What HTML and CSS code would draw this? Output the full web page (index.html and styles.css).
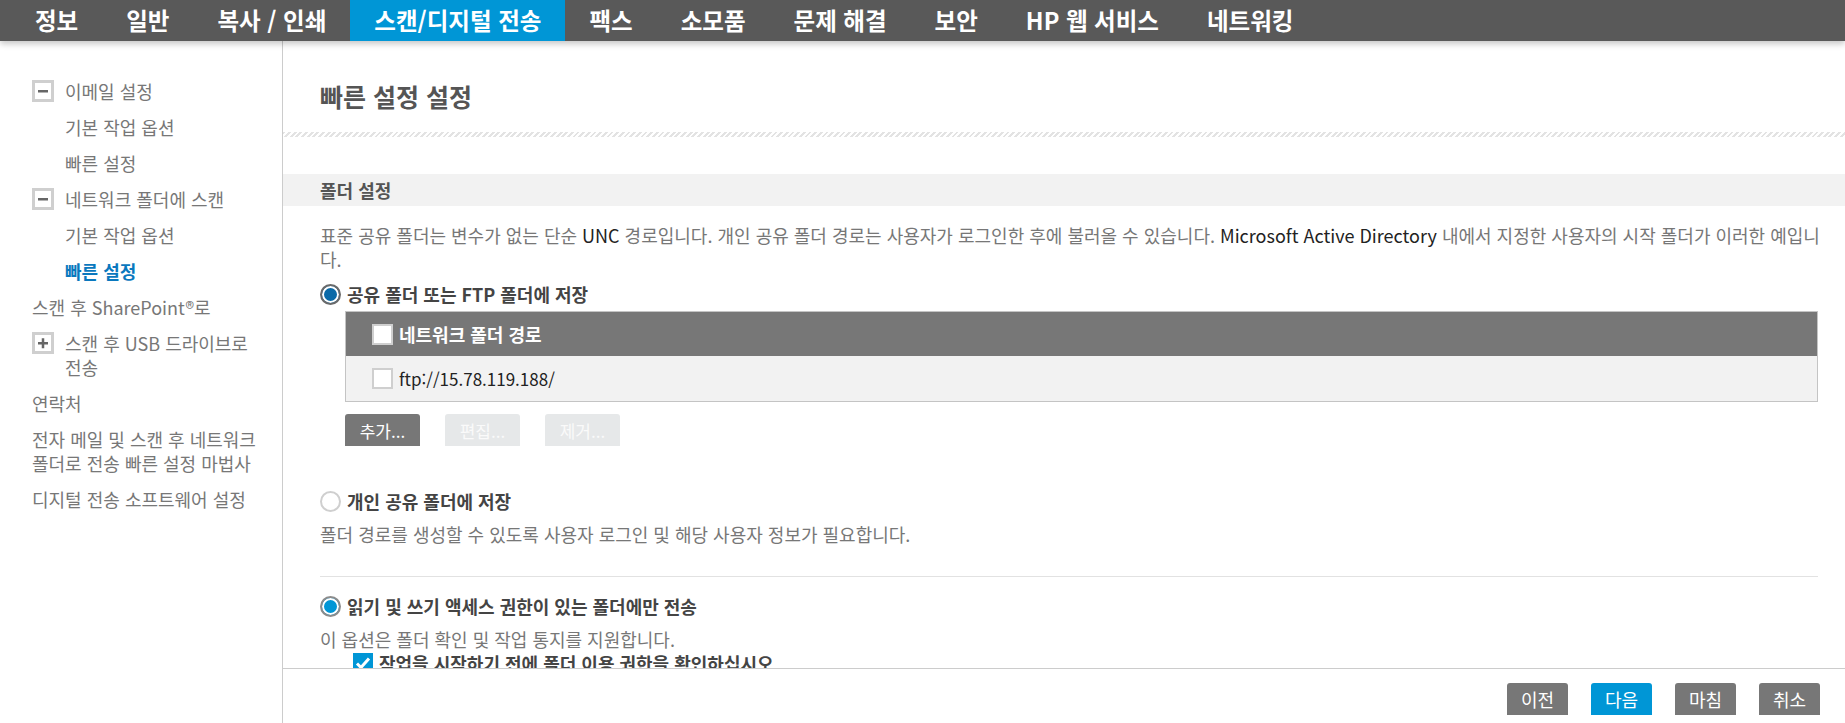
FILE: index.html
```html
<!DOCTYPE html>
<html lang="ko">
<head>
    <meta charset="UTF-8">
    <meta name="viewport" content="width=device-width, initial-scale=1.0">
    <title>스캔/디지털 전송 - 빠른 설정 설정</title>
    <link rel="stylesheet" href="styles.css">
</head>
<body>
    <nav class="topnav">
        <a class="tab">정보</a>
        <a class="tab">일반</a>
        <a class="tab">복사 / 인쇄</a>
        <a class="tab active">스캔/디지털 전송</a>
        <a class="tab">팩스</a>
        <a class="tab">소모품</a>
        <a class="tab">문제 해결</a>
        <a class="tab">보안</a>
        <a class="tab">HP 웹 서비스</a>
        <a class="tab">네트워킹</a>
    </nav>

    <div class="layout">
        <aside class="sidebar">
            <ul class="tree">
                <li class="node">
                    <svg class="toggle" viewBox="0 0 22 22"><rect x="1.5" y="1.5" width="19" height="19" fill="#fff" stroke="#cfcfcf" stroke-width="3"/><rect x="6" y="10" width="10" height="2.5" fill="#666"/></svg>
                    <span>이메일 설정</span>
                </li>
                <li class="leaf">기본 작업 옵션</li>
                <li class="leaf">빠른 설정</li>
                <li class="node">
                    <svg class="toggle" viewBox="0 0 22 22"><rect x="1.5" y="1.5" width="19" height="19" fill="#fff" stroke="#cfcfcf" stroke-width="3"/><rect x="6" y="10" width="10" height="2.5" fill="#666"/></svg>
                    <span>네트워크 폴더에 스캔</span>
                </li>
                <li class="leaf">기본 작업 옵션</li>
                <li class="leaf current">빠른 설정</li>
                <li class="top">스캔 후 SharePoint®로</li>
                <li class="node">
                    <svg class="toggle" viewBox="0 0 22 22"><rect x="1.5" y="1.5" width="19" height="19" fill="#fff" stroke="#cfcfcf" stroke-width="3"/><rect x="6" y="10" width="10" height="2.5" fill="#666"/><rect x="9.75" y="6.25" width="2.5" height="10" fill="#666"/></svg>
                    <span>스캔 후 USB 드라이브로 전송</span>
                </li>
                <li class="top">연락처</li>
                <li class="top">전자 메일 및 스캔 후 네트워크 폴더로 전송 빠른 설정 마법사</li>
                <li class="top">디지털 전송 소프트웨어 설정</li>
            </ul>
        </aside>

        <main class="main">
            <div class="page-head">
                <h1>빠른 설정 설정</h1>
            </div>
            <div class="hatch"></div>

            <div class="content">
                <h2 class="band">폴더 설정</h2>
                <div class="inner">
                    <p class="desc">표준 공유 폴더는 변수가 없는 단순 <span class="latin">UNC</span> 경로입니다. 개인 공유 폴더 경로는 사용자가 로그인한 후에 불러올 수 있습니다. <span class="latin">Microsoft Active Directory</span> 내에서 지정한 사용자의 시작 폴더가 이러한 예입니다.</p>

                    <label class="option first">
                        <span class="radio on dark"></span>공유 폴더 또는 FTP 폴더에 저장
                    </label>

                    <div class="table">
                        <div class="row head">
                            <span class="check"></span>네트워크 폴더 경로
                        </div>
                        <div class="row">
                            <span class="check"></span>ftp://15.78.119.188/
                        </div>
                    </div>

                    <div class="tools">
                        <button class="btn gray">추가...</button>
                        <button class="btn off">편집...</button>
                        <button class="btn off">제거...</button>
                    </div>

                    <label class="option second">
                        <span class="radio"></span>개인 공유 폴더에 저장
                    </label>
                    <p class="note">폴더 경로를 생성할 수 있도록 사용자 로그인 및 해당 사용자 정보가 필요합니다.</p>

                    <hr class="sep">

                    <label class="option third">
                        <span class="radio on"></span>읽기 및 쓰기 액세스 권한이 있는 폴더에만 전송
                    </label>
                    <p class="note">이 옵션은 폴더 확인 및 작업 통지를 지원합니다.</p>
                    <label class="sub-check">
                        <span class="check on">
                            <svg viewBox="0 0 20 20"><path d="M4 10.5l4 4 8-9" fill="none" stroke="#fff" stroke-width="3"/></svg>
                        </span>작업을 시작하기 전에 폴더 이용 권한을 확인하십시오
                    </label>
                </div>
            </div>

            <div class="footer">
                <button class="btn gray">이전</button>
                <button class="btn blue">다음</button>
                <button class="btn gray">마침</button>
                <button class="btn gray">취소</button>
            </div>
        </main>
    </div>
</body>
</html>
```

FILE: styles.css
```css
* {
    box-sizing: border-box;
}
body {
    margin: 0;
    height: 723px;
    overflow: hidden;
    font-family: "Noto Sans CJK KR", "Noto Sans", sans-serif;
    color: #777;
    background-color: #fff;
}

/* top tabs */
.topnav {
    display: flex;
    height: 41px;
    padding-left: 11px;
    background-color: #595959;
    box-shadow: 0 3px 6px rgba(0,0,0,0.22);
    position: relative;
    z-index: 2;
}
.tab {
    padding: 0 24px;
    font-size: 23.5px;
    font-weight: bold;
    line-height: 41px;
    color: #fff;
}
.tab.active {
    background-color: #0096d6;
}

.layout {
    display: flex;
    height: 682px;
}

/* left tree */
.sidebar {
    width: 283px;
    flex-shrink: 0;
    border-right: 1px solid #cccccc;
    padding: 32px 12px 0 32px;
}
.tree {
    list-style: none;
    margin: 0;
    padding: 0;
    font-size: 18px;
    line-height: 24px;
    word-break: keep-all;
}
.tree li {
    padding: 6px 0;
}
.tree .node {
    display: flex;
    align-items: flex-start;
    gap: 11px;
}
.toggle {
    width: 22px;
    height: 22px;
    flex-shrink: 0;
    margin-top: 1px;
}
.tree .leaf {
    padding-left: 33px;
}
.tree .current {
    color: #0a78be;
    font-weight: bold;
}

/* main */
.main {
    flex: 1;
    display: flex;
    flex-direction: column;
    min-width: 0;
}
.page-head {
    padding: 40px 0 0 37px;
    height: 91px;
}
.page-head h1 {
    margin: 0;
    font-size: 25px;
    line-height: 30px;
    color: #555;
}
.hatch {
    height: 5px;
    flex-shrink: 0;
    background: repeating-linear-gradient(135deg, #e3e3e3 0 2px, #fff 2px 4px);
}
.content {
    flex: 1;
    min-height: 0;
    overflow: hidden;
}
.band {
    margin: 37px 0 0;
    height: 32px;
    padding-left: 37px;
    background-color: #f2f2f2;
    font-size: 18px;
    line-height: 32px;
    color: #555;
}
.inner {
    padding: 0 27px 0 37px;
}
.desc {
    margin: 17px -8px 0 0;
    font-size: 18px;
    line-height: 24px;
}
.latin {
    color: #222;
}

.option {
    display: flex;
    align-items: center;
    gap: 6px;
    height: 24px;
    font-size: 18px;
    font-weight: bold;
    color: #444;
}
.option.first {
    margin-top: 11px;
}
.option.second {
    margin-top: 43px;
}
.option.third {
    margin-top: 17px;
}
.radio {
    width: 21px;
    height: 21px;
    border-radius: 50%;
    border: 2px solid #cfcfcf;
    background-color: #fff;
    flex-shrink: 0;
}
.radio.on {
    border-color: #8c8c8c;
    background-color: #0096d6;
    box-shadow: inset 0 0 0 2px #fff;
}
.radio.on.dark {
    border-color: #6a6a6a;
    background-color: #0a6aa8;
}

.table {
    margin: 5px 0 0 25px;
    border: 1px solid #c4c4c4;
}
.row {
    display: flex;
    align-items: center;
    gap: 6px;
    height: 45px;
    padding-left: 26px;
    background-color: #f2f2f2;
    font-size: 17px;
    color: #222;
}
.row.head {
    height: 44px;
    background-color: #777;
    color: #fff;
    font-size: 18px;
    font-weight: bold;
}
.check {
    width: 21px;
    height: 21px;
    border: 2px solid #cfcfcf;
    background-color: #fff;
    flex-shrink: 0;
}
.check.on {
    width: 20px;
    height: 20px;
    border: none;
    background-color: #0096d6;
}
.check.on svg {
    display: block;
    width: 20px;
    height: 20px;
}

.tools {
    display: flex;
    gap: 25px;
    margin: 12px 0 0 25px;
}
.btn {
    height: 32px;
    min-width: 61px;
    padding: 0 12px;
    border: none;
    border-radius: 3px 3px 0 0;
    font-family: inherit;
    font-size: 18px;
    color: #fff;
}
.btn.gray {
    background-color: #777;
}
.btn.blue {
    background-color: #0096d6;
}
.btn.off {
    background-color: #e6e8e9;
    color: #fafafa;
}
.tools .btn {
    width: 75px;
    font-size: 17px;
}

.note {
    margin: 9px 0 0;
    font-size: 18px;
    line-height: 24px;
}
.sep {
    margin: 30px 0 0;
    border: none;
    border-top: 1px solid #e2e2e2;
}
.sub-check {
    display: flex;
    align-items: center;
    gap: 6px;
    margin-left: 33px;
    height: 24px;
    font-size: 18px;
    font-weight: bold;
    color: #444;
}

.footer {
    height: 55px;
    flex-shrink: 0;
    border-top: 1px solid #cccccc;
    display: flex;
    justify-content: flex-end;
    align-items: flex-start;
    gap: 23px;
    padding: 14px 25px 0 0;
}
```
